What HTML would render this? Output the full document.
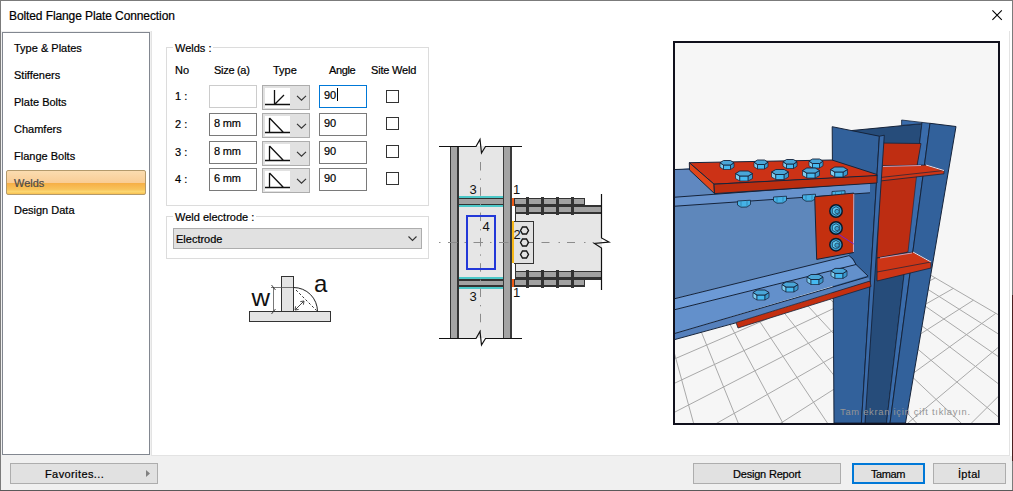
<!DOCTYPE html>
<html><head><meta charset="utf-8">
<style>
html,body{margin:0;padding:0;}
body{width:1013px;height:491px;position:relative;overflow:hidden;background:#fff;font-family:"Liberation Sans",sans-serif;font-size:11px;color:#000;}
.a{position:absolute;box-sizing:border-box;}
.t{position:absolute;white-space:nowrap;line-height:13px;font-size:11px;-webkit-text-stroke:0.2px currentColor;}
</style></head><body>
<!-- window border -->
<div class="a" style="left:0;top:0;width:1013px;height:1px;background:#7b7b7b"></div>
<div class="a" style="left:0;top:0;width:1px;height:491px;background:#7b7b7b"></div>
<div class="a" style="left:1012px;top:0;width:1px;height:491px;background:#7b7b7b"></div>
<div class="a" style="left:1012px;top:295px;width:1px;height:166px;background:#4a2020"></div>
<div class="a" style="left:0;top:490px;width:1013px;height:1px;background:#5a5a5a"></div>
<!-- title -->
<div class="t" style="left:9px;top:10px;font-size:12px;letter-spacing:-0.1px">Bolted Flange Plate Connection</div>
<svg class="a" style="left:990px;top:8px" width="14" height="14"><path d="M2.4 2.4L11.8 11.8M11.8 2.4L2.4 11.8" stroke="#000" stroke-width="1.1"/></svg>
<!-- bottom bar -->
<div class="a" style="left:1px;top:456px;width:1011px;height:34px;background:#f0f0f0"></div>
<div class="a" style="left:1px;top:31px;width:151px;height:425px;background:#f0f0f0"></div>
<!-- nav list -->
<div class="a" style="left:2px;top:32px;width:148px;height:423px;border:1px solid #828790;background:#fff"></div>
<div class="a" style="left:151px;top:31px;width:859px;height:425px;border:1px solid #e3e3e3;border-top:none;background:#fff"></div>
<div class="t" style="left:14px;top:42px">Type &amp; Plates</div>
<div class="t" style="left:14px;top:69px">Stiffeners</div>
<div class="t" style="left:14px;top:96px">Plate Bolts</div>
<div class="t" style="left:14px;top:123px">Chamfers</div>
<div class="t" style="left:14px;top:150px">Flange Bolts</div>
<div class="a" style="left:6px;top:170px;width:140px;height:25px;border:1px solid #b49a6c;border-radius:2px;background:linear-gradient(#fbdcb0 0%,#f9cd96 50%,#f6ae45 52%,#f8c35c 80%,#fcd872 90%,#f8c050 100%)"></div>
<div class="t" style="left:14px;top:177px;color:#4a4a4a">Welds</div>
<div class="t" style="left:14px;top:204px">Design Data</div>

<!-- Welds group -->
<div class="a" style="left:166px;top:47px;width:263px;height:159px;border:1px solid #dcdcdc"></div>
<div class="t" style="left:173px;top:42px;background:#fff;padding:0 2px">Welds :</div>
<div class="t" style="left:175px;top:64px">No</div>
<div class="t" style="left:214px;top:64px;letter-spacing:-0.3px">Size (a)</div>
<div class="t" style="left:273px;top:64px">Type</div>
<div class="t" style="left:329px;top:64px;letter-spacing:-0.35px">Angle</div>
<div class="t" style="left:371px;top:64px;letter-spacing:-0.2px">Site Weld</div>

<!--ROWS-->
<div class="t" style="left:175px;top:90px">1 :</div>
<div class="a" style="left:209px;top:85px;width:48px;height:23px;border:1px solid #cccccc;background:#fff"></div>
<div class="a" style="left:262px;top:85px;width:48px;height:25px;border:1px solid #adadad;background:#e1e1e1"></div>
<div class="a" style="left:265px;top:88px;width:25px;height:20px;background:#fff"></div>
<svg class="a" style="left:0;top:85px" width="320" height="25"><path d="M265 19.5H290M274.5 19.5V5M274.5 19.5L284 10" fill="none" stroke="#111" stroke-width="1.3"/><path d="M297 10.8L301.5 15.2L306 10.8" fill="none" stroke="#333" stroke-width="1.15"/></svg>
<div class="a" style="left:319px;top:85px;width:48px;height:23px;border:1px solid #0078d7;background:#fff"></div>
<div class="t" style="left:324px;top:89px">90</div>
<div class="a" style="left:337px;top:88px;width:1px;height:13px;background:#000"></div>
<div class="a" style="left:386px;top:90px;width:13px;height:13px;border:1px solid #333;background:#fff"></div>
<div class="t" style="left:175px;top:118px">2 :</div>
<div class="a" style="left:209px;top:113px;width:48px;height:23px;border:1px solid #7a7a7a;background:#fff"></div>
<div class="t" style="left:214px;top:117px;letter-spacing:-0.2px">8 mm</div>
<div class="a" style="left:262px;top:113px;width:48px;height:25px;border:1px solid #adadad;background:#e1e1e1"></div>
<div class="a" style="left:265px;top:116px;width:25px;height:20px;background:#fff"></div>
<svg class="a" style="left:0;top:113px" width="320" height="25"><path d="M265 19.5H290M269.5 19.5V5M269.5 5L283.5 19.5" fill="none" stroke="#111" stroke-width="1.3"/><path d="M297 10.8L301.5 15.2L306 10.8" fill="none" stroke="#333" stroke-width="1.15"/></svg>
<div class="a" style="left:319px;top:113px;width:48px;height:23px;border:1px solid #7a7a7a;background:#fff"></div>
<div class="t" style="left:324px;top:117px">90</div>
<div class="a" style="left:386px;top:117px;width:13px;height:13px;border:1px solid #333;background:#fff"></div>
<div class="t" style="left:175px;top:146px">3 :</div>
<div class="a" style="left:209px;top:141px;width:48px;height:23px;border:1px solid #7a7a7a;background:#fff"></div>
<div class="t" style="left:214px;top:145px;letter-spacing:-0.2px">8 mm</div>
<div class="a" style="left:262px;top:141px;width:48px;height:25px;border:1px solid #adadad;background:#e1e1e1"></div>
<div class="a" style="left:265px;top:144px;width:25px;height:20px;background:#fff"></div>
<svg class="a" style="left:0;top:141px" width="320" height="25"><path d="M265 19.5H290M269.5 19.5V5M269.5 5L283.5 19.5" fill="none" stroke="#111" stroke-width="1.3"/><path d="M297 10.8L301.5 15.2L306 10.8" fill="none" stroke="#333" stroke-width="1.15"/></svg>
<div class="a" style="left:319px;top:141px;width:48px;height:23px;border:1px solid #7a7a7a;background:#fff"></div>
<div class="t" style="left:324px;top:145px">90</div>
<div class="a" style="left:386px;top:145px;width:13px;height:13px;border:1px solid #333;background:#fff"></div>
<div class="t" style="left:175px;top:173px">4 :</div>
<div class="a" style="left:209px;top:168px;width:48px;height:23px;border:1px solid #7a7a7a;background:#fff"></div>
<div class="t" style="left:214px;top:172px;letter-spacing:-0.2px">6 mm</div>
<div class="a" style="left:262px;top:168px;width:48px;height:25px;border:1px solid #adadad;background:#e1e1e1"></div>
<div class="a" style="left:265px;top:171px;width:25px;height:20px;background:#fff"></div>
<svg class="a" style="left:0;top:168px" width="320" height="25"><path d="M265 19.5H290M269.5 19.5V5M269.5 5L283.5 19.5" fill="none" stroke="#111" stroke-width="1.3"/><path d="M297 10.8L301.5 15.2L306 10.8" fill="none" stroke="#333" stroke-width="1.15"/></svg>
<div class="a" style="left:319px;top:168px;width:48px;height:23px;border:1px solid #7a7a7a;background:#fff"></div>
<div class="t" style="left:324px;top:172px">90</div>
<div class="a" style="left:386px;top:172px;width:13px;height:13px;border:1px solid #333;background:#fff"></div>
<!--/ROWS-->

<!-- Electrode group -->
<div class="a" style="left:166px;top:216px;width:263px;height:43px;border:1px solid #dcdcdc"></div>
<div class="t" style="left:173px;top:211px;background:#fff;padding:0 2px">Weld electrode :</div>
<div class="a" style="left:173px;top:228px;width:249px;height:21px;border:1px solid #adadad;background:#e1e1e1"></div>
<div class="t" style="left:176px;top:233px">Electrode</div>
<svg class="a" style="left:400px;top:230px" width="20" height="16"><path d="M8.5 6.5L12.5 10.5L16.5 6.5" fill="none" stroke="#333" stroke-width="1.1"/></svg>

<!-- buttons -->
<div class="a" style="left:10px;top:463px;width:148px;height:21px;border:1px solid #adadad;background:#e1e1e1"></div>
<div class="t" style="left:45px;top:468px;letter-spacing:0.4px">Favorites...</div>
<svg class="a" style="left:140px;top:466px" width="16" height="14"><path d="M6 4L10 7.5L6 11Z" fill="#808080"/></svg>
<div class="a" style="left:693px;top:463px;width:148px;height:21px;border:1px solid #adadad;background:#e1e1e1"></div>
<div class="t" style="left:733px;top:468px;letter-spacing:-0.2px">Design Report</div>
<div class="a" style="left:852px;top:463px;width:73px;height:21px;border:2px solid #0078d7;background:#e1e1e1"></div>
<div class="t" style="left:871px;top:468px;letter-spacing:-0.4px">Tamam</div>
<div class="a" style="left:933px;top:463px;width:73px;height:21px;border:1px solid #adadad;background:#e1e1e1"></div>
<div class="t" style="left:958px;top:468px;letter-spacing:0.3px">İptal</div>

<!-- weld sketch -->
<!--SKETCH-->
<svg class="a" style="left:240px;top:268px" width="100" height="60" viewBox="240 268 100 60">
<rect x="249.5" y="311.5" width="81" height="10" fill="#e4e4e4" stroke="#333" stroke-width="1"/>
<rect x="281.5" y="276.5" width="12" height="35" fill="#e4e4e4" stroke="#333" stroke-width="1"/>
<path d="M293.5 287.5A24 24 0 0 1 317.5 311.5" fill="none" stroke="#222" stroke-width="1"/>
<path d="M296 290L316.5 310.5" fill="none" stroke="#333" stroke-width="1" stroke-dasharray="2.5 2"/>
<path d="M295.5 309.5L303.5 301.5" fill="none" stroke="#333" stroke-width="0.9"/>
<path d="M295 310L295.6 306.3M295 310L298.7 309.4M304 301L300.3 301.6M304 301L303.4 304.7" fill="none" stroke="#333" stroke-width="0.9"/>
<path d="M273.5 287.5V311.5M271 287.5H293" fill="none" stroke="#555" stroke-width="0.8"/>
<path d="M271.5 285L275.5 290M271.5 314L275.5 309" fill="none" stroke="#333" stroke-width="0.9"/>
<text x="251.5" y="306" font-family="Liberation Sans" font-size="24" fill="#111" textLength="18.5" lengthAdjust="spacingAndGlyphs">w</text>
<text x="314" y="291.5" font-family="Liberation Sans" font-size="24" fill="#111">a</text>
</svg>

<!--/SKETCH-->
<!-- 2D drawing -->
<!--D2-->
<svg class="a" style="left:430px;top:130px" width="190" height="225" viewBox="430 130 190 225">
<g shape-rendering="crispEdges">
<!-- column web area -->
<rect x="459" y="146" width="44" height="192" fill="#e6e6e6"/>
<!-- flanges -->
<rect x="450" y="146" width="9" height="192" fill="#333"/>
<rect x="451" y="146" width="6" height="192" fill="#a4a4a4"/>
<rect x="503" y="146" width="9" height="192" fill="#3a3a3a"/>
<rect x="504" y="146" width="6" height="192" fill="#a4a4a4"/>
<!-- stiffeners -->
<rect x="459" y="196" width="44" height="2" fill="#4cc8c8"/>
<rect x="459" y="198" width="44" height="7" fill="#333"/>
<rect x="459" y="199" width="44" height="5" fill="#a2a2a2"/>
<rect x="459" y="205" width="44" height="2" fill="#4cc8c8"/>
<rect x="459" y="277" width="44" height="2" fill="#4cc8c8"/>
<rect x="459" y="279" width="44" height="8" fill="#333"/>
<rect x="459" y="281" width="44" height="4" fill="#a2a2a2"/>
<rect x="459" y="287" width="44" height="2" fill="#4cc8c8"/>
<!-- beam web -->
<rect x="515" y="206" width="87" height="72" fill="#e6e6e6"/>
<rect x="515" y="206" width="1" height="72" fill="#333"/>
<!-- top plate & flange -->
<rect x="514" y="198" width="71" height="8" fill="#333"/>
<rect x="515" y="199" width="69" height="5" fill="#a2a2a2"/>
<rect x="515" y="205" width="87" height="9" fill="#333"/>
<rect x="516" y="207" width="86" height="5" fill="#a2a2a2"/>
<!-- bottom flange & plate -->
<rect x="515" y="271" width="87" height="9" fill="#333"/>
<rect x="516" y="272" width="86" height="5" fill="#a2a2a2"/>
<rect x="514" y="279" width="71" height="8" fill="#333"/>
<rect x="515" y="280" width="69" height="5" fill="#a2a2a2"/>
<!-- bolts -->
<rect x="526" y="197" width="3" height="18" fill="#333"/>
<rect x="541" y="197" width="3" height="18" fill="#333"/>
<rect x="556" y="197" width="3" height="18" fill="#333"/>
<rect x="571" y="197" width="3" height="18" fill="#333"/>
<rect x="526" y="270" width="3" height="18" fill="#333"/>
<rect x="541" y="270" width="3" height="18" fill="#333"/>
<rect x="556" y="270" width="3" height="18" fill="#333"/>
<rect x="571" y="270" width="3" height="18" fill="#333"/>
<!-- welds -->
<rect x="512" y="198" width="2" height="8" fill="#f05a14"/>
<rect x="512" y="279" width="2" height="8" fill="#f05a14"/>
<rect x="512" y="221" width="2" height="42" fill="#f7b818"/>
<!-- fin plate -->
<rect x="514" y="221" width="20" height="43" fill="#333"/>
<rect x="514" y="222" width="19" height="41" fill="#e2e2e2"/>
<rect x="512" y="221" width="2" height="42" fill="#f7b818"/>
</g>
<!-- center lines -->
<g fill="none" stroke="#8c8c8c" stroke-width="1">
<path d="M480.5 162V332" stroke-dasharray="8.5 8 1.3 7.5"/>
<path d="M439 242.5H512" stroke-dasharray="1.5 7.5 9.5 7"/>
<path d="M541.5 242.5H594" stroke-dasharray="8 9 1.5 7"/>
<path d="M527.5 242.5H533" stroke="#777"/>
</g>
<!-- fin bolts -->
<g fill="none" stroke="#151515" stroke-width="1.4">
<path d="M520.5 230.5l2-3.5h4l2 3.5l-2 3.5h-4z"/>
<path d="M520.5 242.5l2-3.5h4l2 3.5l-2 3.5h-4z"/>
<path d="M520.5 254.5l2-3.5h4l2 3.5l-2 3.5h-4z"/>
</g>
<!-- blue rect -->
<rect x="467" y="216" width="28" height="53" fill="none" stroke="#2338d8" stroke-width="2"/>
<!-- break lines -->
<g fill="none" stroke="#111" stroke-width="1.2">
<path d="M439 146.5H476L480 139.5L481.5 153L485.5 146.5H522"/>
<path d="M439 338.5H476L480 331.5L481.5 345L485.5 338.5H522"/>
<path d="M601.5 194V238L609 242L594.5 243.5L601.5 248V290"/>
</g>
<g font-family="Liberation Sans" font-size="13" fill="#111">
<text x="469.5" y="194">3</text>
<text x="513" y="194">1</text>
<text x="469.5" y="301">3</text>
<text x="513" y="297">1</text>
<text x="482.5" y="230.5">4</text>
<text x="513.5" y="239">2</text>
</g>
</svg>

<!--/D2-->
<!-- 3D view -->
<div class="a" style="left:673px;top:41px;width:327px;height:384px;border:2px solid #10101c;background:#f6f6f6;overflow:hidden">
<!--D3-->
<svg class="a" style="left:0;top:0" width="323" height="380" viewBox="675 43 323 380">
<g stroke="#a9a9a9" stroke-width="1" fill="none">
<path d="M-796.2 749.5L-688.2 697.8"/>
<path d="M-785.0 788.8L-484.1 635.2"/>
<path d="M-788.6 841.8L-317.9 584.1"/>
<path d="M-792.9 903.4L-179.7 541.7"/>
<path d="M-798.0 975.9L-63.2 505.9"/>
<path d="M-782.7 1047.5L36.5 475.3"/>
<path d="M-787.6 1149.0L122.8 448.8"/>
<path d="M-793.7 1274.4L198.1 425.6"/>
<path d="M-772.4 1405.0L264.4 405.3"/>
<path d="M-777.8 1603.0L323.3 387.2"/>
<path d="M-785.2 1870.7L376.0 371.0"/>
<path d="M-628.7 1992.5L423.3 356.5"/>
<path d="M-357.3 1952.0L466.1 343.3"/>
<path d="M-117.8 1967.3L504.9 331.4"/>
<path d="M125.6 1982.8L540.4 320.5"/>
<path d="M372.8 1998.5L572.9 310.5"/>
<path d="M623.3 1957.8L602.7 301.4"/>
<path d="M871.1 1973.1L630.3 292.9"/>
<path d="M1122.9 1988.7L655.7 285.1"/>
<path d="M1356.0 1948.4L679.4 277.8"/>
<path d="M1608.1 1963.5L701.4 271.0"/>
<path d="M1864.2 1979.0L721.9 264.7"/>
<path d="M2124.5 1994.6L741.1 258.8"/>
<path d="M2336.6 1954.1L759.1 253.3"/>
<path d="M2485.9 1864.3L776.0 248.1"/>
<path d="M2472.3 1657.3L791.9 243.2"/>
<path d="M2461.5 1493.4L806.9 238.6"/>
<path d="M2490.5 1386.5L821.1 234.3"/>
<path d="M2479.9 1272.1L834.4 230.2"/>
<path d="M2470.9 1176.2L847.1 226.3"/>
<path d="M2492.3 1216.3L2419.2 1146.0"/>
<path d="M2496.6 1467.1L2025.1 915.4"/>
<path d="M2479.2 1824.7L1771.3 766.9"/>
<path d="M2224.5 1966.5L1594.2 663.4"/>
<path d="M1883.4 1996.0L1463.7 587.0"/>
<path d="M1526.4 1983.3L1363.4 528.3"/>
<path d="M1173.8 1970.7L1284.0 481.9"/>
<path d="M825.7 1958.3L1219.6 444.2"/>
<path d="M463.3 1987.6L1166.3 413.0"/>
<path d="M116.4 1974.9L1121.4 386.7"/>
<path d="M-226.3 1962.4L1083.1 364.3"/>
<path d="M-606.7 1991.9L1050.0 345.0"/>
<path d="M-763.4 1824.3L1021.2 328.1"/>
<path d="M-777.1 1598.4L995.9 313.3"/>
<path d="M-787.7 1424.2L973.4 300.2"/>
<path d="M-796.1 1285.9L953.3 288.4"/>
<path d="M-776.2 1159.6L935.3 277.9"/>
<path d="M-784.1 1068.5L919.0 268.4"/>
<path d="M-790.7 991.6L904.3 259.7"/>
<path d="M-796.4 925.7L890.8 251.9"/>
<path d="M-782.0 861.6L878.5 244.7"/>
<path d="M-787.4 812.7L867.2 238.0"/>
<path d="M-792.3 769.5L856.8 231.9"/>
<path d="M-796.6 731.1L847.1 226.3"/>
</g>
<rect x="675" y="43" width="323" height="82" fill="#f6f6f6"/>
<polygon points="852.0,130.5 875.0,128.3 922.0,123.7 886.5,423.0 865.0,423.0" fill="#264c7a" stroke="#15233a" stroke-width="1" stroke-linejoin="round" />
<polygon points="901.6,125.4 901.6,120.0 922.0,122.4 922.0,123.7" fill="#3a6cab" stroke="#15233a" stroke-width="0.8" stroke-linejoin="round" />
<polygon points="922.0,122.4 930.0,123.3 890.0,423.0 886.5,423.0" fill="#3a6cab" stroke="#15233a" stroke-width="0.8" stroke-linejoin="round" />
<polygon points="930.0,123.3 956.0,126.5 905.5,423.0 890.0,423.0" fill="#32619b" stroke="#15233a" stroke-width="1" stroke-linejoin="round" />
<polygon points="880.0,143.0 921.0,143.5 917.0,166.0 880.0,166.0" fill="#bf2e12" stroke="#15233a" stroke-width="0.8" stroke-linejoin="round" />
<polygon points="880.0,180.0 917.0,172.0 908.0,252.0 877.0,258.0" fill="#bd2d12" stroke="#15233a" stroke-width="0.6" stroke-linejoin="round" />
<polygon points="880.0,166.0 926.0,165.0 944.0,170.5 944.0,173.8 880.0,181.0" fill="#cd3516" stroke="#15233a" stroke-width="0.8" stroke-linejoin="round" />
<polyline points="880.0,177.5 944.0,170.5" fill="none" stroke="#15233a" stroke-width="0.7" />
<polyline points="926.0,165.0 944.0,170.5" fill="none" stroke="#f0e0e8" stroke-width="1" />
<polyline points="883.0,166.5 921.0,165.5" fill="none" stroke="#c8a0b8" stroke-width="1" />
<polygon points="877.0,258.0 913.0,252.0 931.0,262.0 931.0,268.0 877.0,281.0" fill="#cd3516" stroke="#15233a" stroke-width="0.8" stroke-linejoin="round" />
<polyline points="877.0,272.0 931.0,262.0" fill="none" stroke="#15233a" stroke-width="0.7" />
<polyline points="913.0,252.0 931.0,262.0" fill="none" stroke="#f0e0e8" stroke-width="1" />
<polyline points="880.0,258.0 912.0,253.0" fill="none" stroke="#c8a0b8" stroke-width="1" />
<polygon points="832.2,126.7 879.4,136.2 861.4,423.0 834.0,423.0" fill="#32619b" stroke="#15233a" stroke-width="1" stroke-linejoin="round" />
<polygon points="879.4,136.2 884.3,135.2 865.0,423.0 861.4,423.0" fill="#3a6aa8" stroke="#15233a" stroke-width="0.9" stroke-linejoin="round" />
<polygon points="675.0,169.5 689.0,168.5 714.0,186.0 849.0,178.0 849.0,256.0 675.0,298.6" fill="#5e87bb" />
<polygon points="675.0,169.5 700.0,168.0 700.0,198.0 675.0,197.2" fill="#6088c0" />
<polygon points="675.0,197.2 870.0,182.8 870.0,192.8 675.0,206.2" fill="#6792cc" />
<polyline points="675.0,197.2 870.0,182.8" fill="none" stroke="#15233a" stroke-width="1" />
<polyline points="675.0,206.2 870.0,192.8" fill="none" stroke="#15233a" stroke-width="1" />
<polyline points="675.0,169.5 690.0,169.0" fill="none" stroke="#15233a" stroke-width="1" />
<polygon points="675.0,298.6 849.0,255.6 853.0,260.0 856.0,265.0 675.0,309.6" fill="#6c9ad6" />
<polygon points="675.0,309.6 856.0,264.5 868.0,275.5 675.0,333.4" fill="#6390cb" />
<polygon points="675.0,333.4 868.0,276.7 870.0,281.0 736.0,322.5 675.0,339.5" fill="#5580bc" />
<polyline points="675.0,298.6 849.0,255.6 853.0,259.0 856.0,264.5" fill="none" stroke="#15233a" stroke-width="1" />
<polyline points="675.0,309.6 856.0,264.5 868.0,276.0" fill="none" stroke="#15233a" stroke-width="1" />
<polyline points="675.0,333.4 868.0,276.7" fill="none" stroke="#15233a" stroke-width="1" />
<polyline points="675.0,339.5 736.0,322.8" fill="none" stroke="#15233a" stroke-width="1" />
<polygon points="736.0,322.5 870.0,281.0 871.0,286.5 738.0,328.0" fill="#c42f10" stroke="#15233a" stroke-width="0.8" stroke-linejoin="round" />
<polygon points="689.3,162.7 832.0,160.0 877.0,174.5 877.0,176.0 714.0,184.2" fill="#cc3216" stroke="#15233a" stroke-width="1" stroke-linejoin="round" />
<polygon points="689.3,162.7 714.0,184.2 714.5,193.6 689.5,170.0" fill="#e0461a" stroke="#15233a" stroke-width="1" stroke-linejoin="round" />
<polygon points="714.0,184.2 877.0,175.5 877.0,183.0 714.5,193.6" fill="#bb2d0f" stroke="#15233a" stroke-width="1" stroke-linejoin="round" />
<polygon points="720.0,162.8 723.5,165.0 723.5,169.5 720.0,167.2" fill="#7fcdee" stroke="#15233a" stroke-width="0.7" stroke-linejoin="round" />
<polygon points="723.5,165.0 730.5,165.0 730.5,169.5 723.5,169.5" fill="#45b9f0" stroke="#15233a" stroke-width="0.7" stroke-linejoin="round" />
<polygon points="730.5,165.0 734.0,162.8 734.0,167.2 730.5,169.5" fill="#3a98cc" stroke="#15233a" stroke-width="0.7" stroke-linejoin="round" />
<polygon points="720.0,162.8 723.5,160.5 730.5,160.5 734.0,162.8 730.5,165.0 723.5,165.0" fill="#4aa6d8" stroke="#15233a" stroke-width="0.9" stroke-linejoin="round" />
<polygon points="754.0,162.2 757.5,164.5 757.5,169.0 754.0,166.8" fill="#7fcdee" stroke="#15233a" stroke-width="0.7" stroke-linejoin="round" />
<polygon points="757.5,164.5 764.5,164.5 764.5,169.0 757.5,169.0" fill="#45b9f0" stroke="#15233a" stroke-width="0.7" stroke-linejoin="round" />
<polygon points="764.5,164.5 768.0,162.2 768.0,166.8 764.5,169.0" fill="#3a98cc" stroke="#15233a" stroke-width="0.7" stroke-linejoin="round" />
<polygon points="754.0,162.2 757.5,160.0 764.5,160.0 768.0,162.2 764.5,164.5 757.5,164.5" fill="#4aa6d8" stroke="#15233a" stroke-width="0.9" stroke-linejoin="round" />
<polygon points="783.0,161.8 786.5,164.0 786.5,168.5 783.0,166.2" fill="#7fcdee" stroke="#15233a" stroke-width="0.7" stroke-linejoin="round" />
<polygon points="786.5,164.0 793.5,164.0 793.5,168.5 786.5,168.5" fill="#45b9f0" stroke="#15233a" stroke-width="0.7" stroke-linejoin="round" />
<polygon points="793.5,164.0 797.0,161.8 797.0,166.2 793.5,168.5" fill="#3a98cc" stroke="#15233a" stroke-width="0.7" stroke-linejoin="round" />
<polygon points="783.0,161.8 786.5,159.5 793.5,159.5 797.0,161.8 793.5,164.0 786.5,164.0" fill="#4aa6d8" stroke="#15233a" stroke-width="0.9" stroke-linejoin="round" />
<polygon points="809.0,161.2 812.5,163.5 812.5,168.0 809.0,165.8" fill="#7fcdee" stroke="#15233a" stroke-width="0.7" stroke-linejoin="round" />
<polygon points="812.5,163.5 819.5,163.5 819.5,168.0 812.5,168.0" fill="#45b9f0" stroke="#15233a" stroke-width="0.7" stroke-linejoin="round" />
<polygon points="819.5,163.5 823.0,161.2 823.0,165.8 819.5,168.0" fill="#3a98cc" stroke="#15233a" stroke-width="0.7" stroke-linejoin="round" />
<polygon points="809.0,161.2 812.5,159.0 819.5,159.0 823.0,161.2 819.5,163.5 812.5,163.5" fill="#4aa6d8" stroke="#15233a" stroke-width="0.9" stroke-linejoin="round" />
<polygon points="735.5,173.5 739.8,176.0 739.8,181.0 735.5,178.5" fill="#7fcdee" stroke="#15233a" stroke-width="0.7" stroke-linejoin="round" />
<polygon points="739.8,176.0 748.2,176.0 748.2,181.0 739.8,181.0" fill="#45b9f0" stroke="#15233a" stroke-width="0.7" stroke-linejoin="round" />
<polygon points="748.2,176.0 752.5,173.5 752.5,178.5 748.2,181.0" fill="#3a98cc" stroke="#15233a" stroke-width="0.7" stroke-linejoin="round" />
<polygon points="735.5,173.5 739.8,171.0 748.2,171.0 752.5,173.5 748.2,176.0 739.8,176.0" fill="#4aa6d8" stroke="#15233a" stroke-width="0.9" stroke-linejoin="round" />
<polygon points="771.5,172.0 775.8,174.5 775.8,179.5 771.5,177.0" fill="#7fcdee" stroke="#15233a" stroke-width="0.7" stroke-linejoin="round" />
<polygon points="775.8,174.5 784.2,174.5 784.2,179.5 775.8,179.5" fill="#45b9f0" stroke="#15233a" stroke-width="0.7" stroke-linejoin="round" />
<polygon points="784.2,174.5 788.5,172.0 788.5,177.0 784.2,179.5" fill="#3a98cc" stroke="#15233a" stroke-width="0.7" stroke-linejoin="round" />
<polygon points="771.5,172.0 775.8,169.5 784.2,169.5 788.5,172.0 784.2,174.5 775.8,174.5" fill="#4aa6d8" stroke="#15233a" stroke-width="0.9" stroke-linejoin="round" />
<polygon points="802.5,170.5 806.8,173.0 806.8,178.0 802.5,175.5" fill="#7fcdee" stroke="#15233a" stroke-width="0.7" stroke-linejoin="round" />
<polygon points="806.8,173.0 815.2,173.0 815.2,178.0 806.8,178.0" fill="#45b9f0" stroke="#15233a" stroke-width="0.7" stroke-linejoin="round" />
<polygon points="815.2,173.0 819.5,170.5 819.5,175.5 815.2,178.0" fill="#3a98cc" stroke="#15233a" stroke-width="0.7" stroke-linejoin="round" />
<polygon points="802.5,170.5 806.8,168.0 815.2,168.0 819.5,170.5 815.2,173.0 806.8,173.0" fill="#4aa6d8" stroke="#15233a" stroke-width="0.9" stroke-linejoin="round" />
<polygon points="830.5,169.5 834.8,172.0 834.8,177.0 830.5,174.5" fill="#7fcdee" stroke="#15233a" stroke-width="0.7" stroke-linejoin="round" />
<polygon points="834.8,172.0 843.2,172.0 843.2,177.0 834.8,177.0" fill="#45b9f0" stroke="#15233a" stroke-width="0.7" stroke-linejoin="round" />
<polygon points="843.2,172.0 847.5,169.5 847.5,174.5 843.2,177.0" fill="#3a98cc" stroke="#15233a" stroke-width="0.7" stroke-linejoin="round" />
<polygon points="830.5,169.5 834.8,167.0 843.2,167.0 847.5,169.5 843.2,172.0 834.8,172.0" fill="#4aa6d8" stroke="#15233a" stroke-width="0.9" stroke-linejoin="round" />
<polygon points="737.5,201.0 750.5,200.2 750.5,204.5 747.0,207.0 741.0,207.2 737.5,205.0" fill="#45b2e6" stroke="#15233a" stroke-width="0.8" stroke-linejoin="round" />
<polyline points="741.0,200.8 741.0,207.2" fill="none" stroke="#2a6f9a" stroke-width="0.6" />
<polyline points="747.0,200.5 747.0,207.0" fill="none" stroke="#2a6f9a" stroke-width="0.6" />
<polygon points="773.5,197.0 786.5,196.2 786.5,200.5 783.0,203.0 777.0,203.2 773.5,201.0" fill="#45b2e6" stroke="#15233a" stroke-width="0.8" stroke-linejoin="round" />
<polyline points="777.0,196.8 777.0,203.2" fill="none" stroke="#2a6f9a" stroke-width="0.6" />
<polyline points="783.0,196.5 783.0,203.0" fill="none" stroke="#2a6f9a" stroke-width="0.6" />
<polygon points="802.5,195.0 815.5,194.2 815.5,198.5 812.0,201.0 806.0,201.2 802.5,199.0" fill="#45b2e6" stroke="#15233a" stroke-width="0.8" stroke-linejoin="round" />
<polyline points="806.0,194.8 806.0,201.2" fill="none" stroke="#2a6f9a" stroke-width="0.6" />
<polyline points="812.0,194.5 812.0,201.0" fill="none" stroke="#2a6f9a" stroke-width="0.6" />
<polygon points="832.0,191.5 845.0,190.7 845.0,195.0 841.5,197.5 835.5,197.7 832.0,195.5" fill="#45b2e6" stroke="#15233a" stroke-width="0.8" stroke-linejoin="round" />
<polyline points="835.5,191.3 835.5,197.7" fill="none" stroke="#2a6f9a" stroke-width="0.6" />
<polyline points="841.5,191.0 841.5,197.5" fill="none" stroke="#2a6f9a" stroke-width="0.6" />
<polygon points="814.7,196.8 853.8,193.1 853.4,252.6 816.7,259.4" fill="#c4300f" stroke="#15233a" stroke-width="1" stroke-linejoin="round" />
<polyline points="853.8,194.0 853.4,252.0" fill="none" stroke="#e8b0c0" stroke-width="1" />
<polyline points="836.7,233.0 853.8,244.0" fill="none" stroke="#7a20d0" stroke-width="1" />
<circle cx="836" cy="211" r="6.2" fill="#3aa6da" stroke="#0c1828" stroke-width="1.5"/>
<polygon points="839.7,213.2 836.0,215.3 832.3,213.2 832.3,208.8 836.0,206.7 839.7,208.8" fill="#5cc6ee" stroke="#1a3550" stroke-width="0.8"/>
<circle cx="837" cy="211.5" r="2.2" fill="#3aa0d0" stroke="#1a3550" stroke-width="0.7"/>
<circle cx="836" cy="228" r="6.2" fill="#3aa6da" stroke="#0c1828" stroke-width="1.5"/>
<polygon points="839.7,230.2 836.0,232.3 832.3,230.2 832.3,225.8 836.0,223.7 839.7,225.8" fill="#5cc6ee" stroke="#1a3550" stroke-width="0.8"/>
<circle cx="837" cy="228.5" r="2.2" fill="#3aa0d0" stroke="#1a3550" stroke-width="0.7"/>
<circle cx="836" cy="244.7" r="6.2" fill="#3aa6da" stroke="#0c1828" stroke-width="1.5"/>
<polygon points="839.7,246.8 836.0,249.0 832.3,246.8 832.3,242.5 836.0,240.4 839.7,242.5" fill="#5cc6ee" stroke="#1a3550" stroke-width="0.8"/>
<circle cx="837" cy="245.2" r="2.2" fill="#3aa0d0" stroke="#1a3550" stroke-width="0.7"/>
<polygon points="753.0,292.5 757.0,295.0 757.0,300.0 753.0,297.5" fill="#7fcdee" stroke="#15233a" stroke-width="0.7" stroke-linejoin="round" />
<polygon points="757.0,295.0 765.0,295.0 765.0,300.0 757.0,300.0" fill="#45b9f0" stroke="#15233a" stroke-width="0.7" stroke-linejoin="round" />
<polygon points="765.0,295.0 769.0,292.5 769.0,297.5 765.0,300.0" fill="#3a98cc" stroke="#15233a" stroke-width="0.7" stroke-linejoin="round" />
<polygon points="753.0,292.5 757.0,290.0 765.0,290.0 769.0,292.5 765.0,295.0 757.0,295.0" fill="#4aa6d8" stroke="#15233a" stroke-width="0.9" stroke-linejoin="round" />
<polygon points="782.0,284.5 786.0,287.0 786.0,292.0 782.0,289.5" fill="#7fcdee" stroke="#15233a" stroke-width="0.7" stroke-linejoin="round" />
<polygon points="786.0,287.0 794.0,287.0 794.0,292.0 786.0,292.0" fill="#45b9f0" stroke="#15233a" stroke-width="0.7" stroke-linejoin="round" />
<polygon points="794.0,287.0 798.0,284.5 798.0,289.5 794.0,292.0" fill="#3a98cc" stroke="#15233a" stroke-width="0.7" stroke-linejoin="round" />
<polygon points="782.0,284.5 786.0,282.0 794.0,282.0 798.0,284.5 794.0,287.0 786.0,287.0" fill="#4aa6d8" stroke="#15233a" stroke-width="0.9" stroke-linejoin="round" />
<polygon points="807.0,277.0 811.0,279.5 811.0,284.5 807.0,282.0" fill="#7fcdee" stroke="#15233a" stroke-width="0.7" stroke-linejoin="round" />
<polygon points="811.0,279.5 819.0,279.5 819.0,284.5 811.0,284.5" fill="#45b9f0" stroke="#15233a" stroke-width="0.7" stroke-linejoin="round" />
<polygon points="819.0,279.5 823.0,277.0 823.0,282.0 819.0,284.5" fill="#3a98cc" stroke="#15233a" stroke-width="0.7" stroke-linejoin="round" />
<polygon points="807.0,277.0 811.0,274.5 819.0,274.5 823.0,277.0 819.0,279.5 811.0,279.5" fill="#4aa6d8" stroke="#15233a" stroke-width="0.9" stroke-linejoin="round" />
<polygon points="831.0,270.9 835.0,273.4 835.0,278.4 831.0,275.9" fill="#7fcdee" stroke="#15233a" stroke-width="0.7" stroke-linejoin="round" />
<polygon points="835.0,273.4 843.0,273.4 843.0,278.4 835.0,278.4" fill="#45b9f0" stroke="#15233a" stroke-width="0.7" stroke-linejoin="round" />
<polygon points="843.0,273.4 847.0,270.9 847.0,275.9 843.0,278.4" fill="#3a98cc" stroke="#15233a" stroke-width="0.7" stroke-linejoin="round" />
<polygon points="831.0,270.9 835.0,268.4 843.0,268.4 847.0,270.9 843.0,273.4 835.0,273.4" fill="#4aa6d8" stroke="#15233a" stroke-width="0.9" stroke-linejoin="round" />
<text x="840" y="414.5" font-family="Liberation Sans" font-size="9.3" letter-spacing="0.75" fill="#959595">Tam ekran için çift tıklayın.</text>
</svg>
<!--/D3-->
</div>
</body></html>
